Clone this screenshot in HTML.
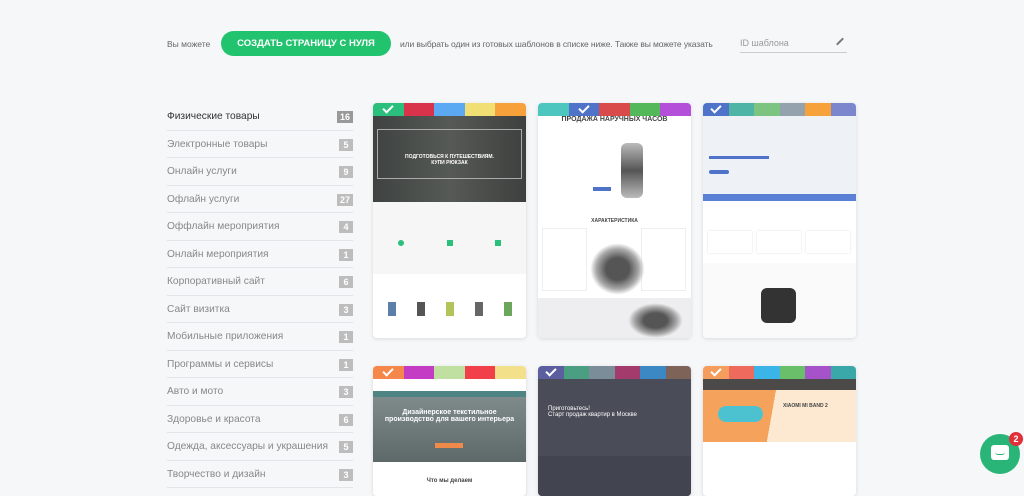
<!DOCTYPE html>
<html><head><meta charset="utf-8"><style>
*{margin:0;padding:0;box-sizing:border-box}
body{width:1024px;height:486px;overflow:hidden;background:#f6f7f9;font-family:"Liberation Sans","DejaVu Sans",sans-serif;position:relative}
.a{position:absolute}
.top{font-size:8.5px;color:#666}
.btn{left:221px;top:31px;width:170px;height:25px;border-radius:13px;background:#22c36e;color:#fff;font-size:9.5px;font-weight:bold;text-align:center;line-height:25px}
.side{left:167px;width:186px;height:27.5px;border-bottom:1px solid #e4e5e8;font-size:10.2px;color:#888;line-height:27px}
.side b{position:absolute;right:0;top:8px;height:12px;min-width:14px;padding:0 3px;background:#bdbdbd;color:#fff;font-size:9px;line-height:12px;text-align:center;font-weight:bold}
.card{width:153px;background:#fff;border-radius:4px;overflow:hidden;box-shadow:0 1px 4px rgba(0,0,0,.12)}
.bar{display:flex;height:13px}
.bar i{flex:1;position:relative}
.ck::after{content:"";position:absolute;left:50%;top:2px;width:8px;height:4px;border-left:2px solid #fff;border-bottom:2px solid #fff;transform:translateX(-50%) rotate(-45deg)}
.t{position:absolute;font-size:5px;color:#444;text-align:center;font-weight:bold}
</style></head><body>
<div class="a top" style="left:167px;top:39px">Вы можете</div>
<div class="a btn">СОЗДАТЬ СТРАНИЦУ С НУЛЯ</div>
<div class="a top" style="left:400px;top:39px;letter-spacing:-0.1px">или выбрать один из готовых шаблонов в списке ниже. Также вы можете указать</div>
<div class="a top" style="left:740px;top:38px;color:#999;font-size:9px">ID шаблона</div>
<div class="a" style="left:740px;top:52px;width:107px;height:1px;background:#ccc"></div>
<div class="a" style="left:839px;top:37px;width:2px;height:9px;background:#777;transform:rotate(45deg)"></div>

<div class="a side" style="top:103px;color:#333">Физические товары<b style="background:#999">16</b></div>
<div class="a side" style="top:130.5px">Электронные товары<b>5</b></div>
<div class="a side" style="top:158px">Онлайн услуги<b>9</b></div>
<div class="a side" style="top:185.5px">Офлайн услуги<b>27</b></div>
<div class="a side" style="top:213px">Оффлайн мероприятия<b>4</b></div>
<div class="a side" style="top:240.5px">Онлайн мероприятия<b>1</b></div>
<div class="a side" style="top:268px">Корпоративный сайт<b>6</b></div>
<div class="a side" style="top:295.5px">Сайт визитка<b>3</b></div>
<div class="a side" style="top:323px">Мобильные приложения<b>1</b></div>
<div class="a side" style="top:350.5px">Программы и сервисы<b>1</b></div>
<div class="a side" style="top:378px">Авто и мото<b>3</b></div>
<div class="a side" style="top:405.5px">Здоровье и красота<b>6</b></div>
<div class="a side" style="top:433px">Одежда, аксессуары и украшения<b>5</b></div>
<div class="a side" style="top:460.5px">Творчество и дизайн<b>3</b></div>

<!-- row 1 -->
<div class="a card" style="left:373px;top:103px;height:235px">
 <div class="bar"><i class="ck" style="background:#2bbf7e"></i><i style="background:#d9324b"></i><i style="background:#5aa9f2"></i><i style="background:#f0df72"></i><i style="background:#f7a13a"></i></div>
 <div style="height:86px;background:linear-gradient(90deg,#3e4240,#565a57 50%,#3d403e)"></div>
 <div style="position:absolute;left:4px;top:26px;width:145px;height:50px;border:1px solid #aaa"></div>
 <div class="t" style="left:20px;top:51px;width:113px;color:#fff">ПОДГОТОВЬСЯ К ПУТЕШЕСТВИЯМ.<br>КУПИ РЮКЗАК</div>
 <div style="height:72px;background:#f6f6f6"></div>
 <div style="position:absolute;left:25px;top:137px;width:6px;height:6px;background:#2bbf7e;border-radius:50%"></div>
 <div style="position:absolute;left:74px;top:137px;width:6px;height:6px;background:#2bbf7e"></div>
 <div style="position:absolute;left:122px;top:137px;width:6px;height:6px;background:#2bbf7e"></div>
 <div style="display:flex;justify-content:space-around;padding:28px 4px 0">
  <i style="width:8px;height:14px;background:#5b7fa8"></i><i style="width:8px;height:14px;background:#555"></i><i style="width:8px;height:14px;background:#b3c55a"></i><i style="width:8px;height:14px;background:#666"></i><i style="width:8px;height:14px;background:#6aa65c"></i></div>
</div>
<div class="a card" style="left:538px;top:103px;height:235px">
 <div class="bar"><i style="background:#4ec6c0"></i><i class="ck" style="background:#4e73c9"></i><i style="background:#d94b4b"></i><i style="background:#52b85a"></i><i style="background:#b44fd9"></i></div>
 <div class="t" style="left:20px;top:13px;width:113px;font-size:7px">ПРОДАЖА НАРУЧНЫХ ЧАСОВ</div>
 <div style="position:absolute;left:83px;top:40px;width:22px;height:55px;background:linear-gradient(#bbb,#555 50%,#bbb);border-radius:6px"></div>
 <div style="position:absolute;left:55px;top:84px;width:18px;height:4px;background:#4e73c9"></div>
 <div class="t" style="left:20px;top:115px;width:113px">ХАРАКТЕРИСТИКА</div>
 <div style="position:absolute;left:4px;top:125px;width:45px;height:63px;border:1px solid #eee"></div>
 <div style="position:absolute;left:103px;top:125px;width:45px;height:63px;border:1px solid #eee"></div>
 <div style="position:absolute;left:52px;top:140px;width:55px;height:52px;background:radial-gradient(#555 30%,#aaa 55%,transparent 70%)"></div>
 <div style="position:absolute;left:0;top:195px;width:153px;height:40px;background:#eeeef0"></div>
 <div style="position:absolute;left:90px;top:200px;width:55px;height:35px;background:radial-gradient(#555 30%,#aaa 55%,transparent 70%)"></div>
</div>
<div class="a card" style="left:703px;top:103px;height:235px">
 <div class="bar"><i class="ck" style="background:#4e73c9"></i><i style="background:#4eb5a6"></i><i style="background:#7cc47f"></i><i style="background:#93a2ad"></i><i style="background:#f7a13a"></i><i style="background:#7b86cc"></i></div>
 <div style="height:78px;background:#eef1f6"></div>
 <div style="position:absolute;left:6px;top:53px;width:60px;height:3px;background:#4e73c9"></div>
 <div style="position:absolute;left:6px;top:67px;width:20px;height:4px;background:#4e73c9;border-radius:2px"></div>
 <div style="height:7px;background:#5a80d6"></div>
 <div style="position:absolute;left:5px;top:128px;width:44px;height:22px;background:#fff;box-shadow:0 0 2px #ddd"></div>
 <div style="position:absolute;left:54px;top:128px;width:44px;height:22px;background:#fff;box-shadow:0 0 2px #ddd"></div>
 <div style="position:absolute;left:103px;top:128px;width:44px;height:22px;background:#fff;box-shadow:0 0 2px #ddd"></div>
 <div style="position:absolute;left:0;top:160px;width:153px;height:75px;background:#fafafa"></div>
 <div style="position:absolute;left:58px;top:185px;width:35px;height:35px;background:#333;border-radius:6px"></div>
</div>

<!-- row 2 -->
<div class="a card" style="left:373px;top:366px;height:130px">
 <div class="bar"><i class="ck" style="background:#f5874a"></i><i style="background:#c53cc4"></i><i style="background:#bfe0a0"></i><i style="background:#f2404a"></i><i style="background:#f2e08a"></i></div>
 <div style="height:12px;background:#fff"></div>
 <div style="height:6px;background:#4f8484"></div>
 <div style="height:65px;background:linear-gradient(#7f8a8a,#5d6868)"></div>
 <div class="t" style="left:10px;top:43px;width:133px;color:#fff;font-size:7px">Дизайнерское текстильное<br>производство для вашего интерьера</div>
 <div style="position:absolute;left:62px;top:77px;width:28px;height:5px;background:#f08a4a"></div>
 <div class="t" style="left:10px;top:112px;width:133px;font-size:6px">Что мы делаем</div>
</div>
<div class="a card" style="left:538px;top:366px;height:130px">
 <div class="bar"><i class="ck" style="background:#5b5fa0"></i><i style="background:#4a9f82"></i><i style="background:#7b8d99"></i><i style="background:#a33b6c"></i><i style="background:#3b88c5"></i><i style="background:#7d6358"></i></div>
 <div style="height:117px;background:#4a4c58"></div>
 <div style="position:absolute;left:0;top:90px;width:153px;height:40px;background:#42444f"></div>
 <div class="t" style="left:10px;top:40px;color:#fff;text-align:left;font-size:6px;font-weight:normal">Приготовьтесь!<br>Старт продаж квартир в Москве</div>
</div>
<div class="a card" style="left:703px;top:366px;height:130px">
 <div class="bar"><i class="ck" style="background:#f59d5c"></i><i style="background:#ee6a5c"></i><i style="background:#3bb4e8"></i><i style="background:#6abf6a"></i><i style="background:#a652c9"></i><i style="background:#3aa8a8"></i></div>
 <div style="height:11px;background:#4c4a48"></div>
 <div style="height:52px;background:linear-gradient(100deg,#f5a25c 45%,#fde9d2 45%)"></div>
 <div style="position:absolute;left:15px;top:40px;width:45px;height:16px;background:#4cc2d0;border-radius:8px"></div>
 <div class="t" style="left:80px;top:37px;text-align:left;font-size:5px">XIAOMI MI BAND 2</div>
</div>

<div class="a" style="left:980px;top:434px;width:40px;height:40px;border-radius:50%;background:#2ab578"></div>
<div class="a" style="left:991px;top:445px;width:18px;height:15px;background:#fff;border-radius:3px"></div>
<div class="a" style="left:995px;top:452px;width:10px;height:3px;border-bottom:1.5px solid #2ab578;border-radius:0 0 5px 5px"></div>
<div class="a" style="left:1009px;top:432px;width:14px;height:14px;border-radius:50%;background:#e0303a;color:#fff;font-size:9px;text-align:center;line-height:14px;font-weight:bold">2</div>
</body></html>
